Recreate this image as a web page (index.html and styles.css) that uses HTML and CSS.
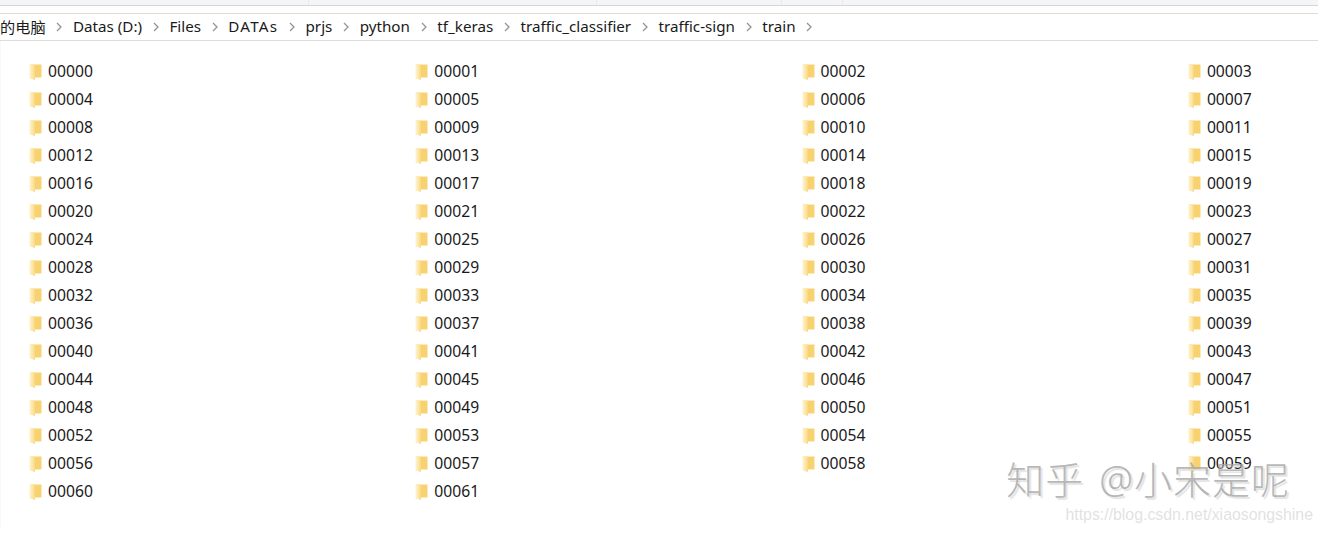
FILE: index.html
```html
<!DOCTYPE html>
<html lang="zh-CN">
    <head>
        <meta charset="UTF-8">
        <title>train</title>
        <link rel="stylesheet" href="styles.css">
    </head>
    <body>
        <svg width="0" height="0" class="defs">
            <defs>
                <linearGradient id="fold" x1="0" y1="0" x2="1" y2="0">
                    <stop offset="0" stop-color="#fdf3cf"/>
                    <stop offset="0.6" stop-color="#fce6a4"/>
                    <stop offset="1" stop-color="#f8d67c"/>
                </linearGradient>
                <symbol id="folder" viewBox="0 0 13 17">
                    <path d="M1 1.5h11.5v13H1z" fill="#f8d271"/>
                    <path d="M0.5 0.5l5.5 1.5v15l-5.5-1.5z" fill="url(#fold)"/>
                </symbol>
                <symbol id="chev" viewBox="0 0 6 10">
                    <path d="M1 1l4 4-4 4" fill="none" stroke="#949494" stroke-width="1.3"/>
                </symbol>
            </defs>
        </svg>
        <div class="window">
            <div class="tabs">
                <span class="tab tab-a"></span>
                <span class="tab tab-b"></span>
                <span class="tab tab-c"></span>
                <span class="tab tab-d"></span>
            </div>
            <div class="address">
                <span class="crumb">的电脑</span><svg class="chev"><use href="#chev"/></svg>
                <span class="crumb">Datas (D:)</span><svg class="chev"><use href="#chev"/></svg>
                <span class="crumb">Files</span><svg class="chev"><use href="#chev"/></svg>
                <span class="crumb crumb-caps">DATAs</span><svg class="chev"><use href="#chev"/></svg>
                <span class="crumb">prjs</span><svg class="chev"><use href="#chev"/></svg>
                <span class="crumb">python</span><svg class="chev"><use href="#chev"/></svg>
                <span class="crumb">tf_keras</span><svg class="chev"><use href="#chev"/></svg>
                <span class="crumb">traffic_classifier</span><svg class="chev"><use href="#chev"/></svg>
                <span class="crumb">traffic-sign</span><svg class="chev"><use href="#chev"/></svg>
                <span class="crumb">train</span><svg class="chev"><use href="#chev"/></svg>
            </div>
            <div class="files" id="files"></div>
        </div>
        <div class="mark">
            <div class="mark-zh">知乎 @小宋是呢</div>
            <div class="mark-url">https://blog.csdn.net/xiaosongshine</div>
        </div>
        <script>
            var box = document.getElementById('files');
            for (var i = 0; i < 62; i++) {
                var row = document.createElement('div');
                row.className = 'file';
                row.innerHTML = '<svg class="folder"><use href="#folder"/></svg><span>' + String(i).padStart(5, '0') + '</span>';
                box.appendChild(row);
            }
        </script>
    </body>
</html>
```

FILE: styles.css
```css
* {
    margin: 0;
    padding: 0;
    box-sizing: border-box;
}

html, body {
    overflow: hidden;
}

body {
    position: relative;
    width: 1322px;
    height: 533px;
    background-color: #fff;
    color: #1a1a1a;
    font-family: "Noto Sans", "Noto Sans CJK SC", sans-serif;
}

.defs {
    position: absolute;
}

.window {
    width: 1318px;
}

/* 顶部标签条 */
.tabs {
    display: flex;
    height: 6px;
    background-color: #f4f5f7;
    border-bottom: 1px solid #d6d6d6;
}

.tab {
    height: 5px;
    border-right: 1px solid #eaeaea;
}

.tab-a { width: 309px; }
.tab-b { width: 288px; }
.tab-c { width: 185px; }
.tab-d { width: 61px; }

/* 地址栏 */
.address {
    display: flex;
    align-items: center;
    height: 28px;
    margin-top: 7px;
    border-top: 1px solid #dedcd8;
    border-bottom: 1px solid #dcdcdc;
    font-size: 15.2px;
    white-space: nowrap;
}

.crumb {
    margin-top: -3px;
}

.crumb-caps {
    letter-spacing: 1.2px;
}

.chev {
    width: 6px;
    height: 10px;
    margin: 0 10.7px;
}

/* 文件列表 */
.files {
    display: grid;
    grid-template-columns: repeat(3, 386.3px) 1fr;
    grid-auto-rows: 28px;
    height: 487px;
    padding: 16px 0 0 28px;
    border-left: 1px solid #f8f8f8;
    font-size: 15.7px;
}

.file {
    display: flex;
    align-items: center;
    gap: 6px;
}

.folder {
    width: 13px;
    height: 17px;
}

/* 水印 */
.mark {
    position: absolute;
    right: 9px;
    top: 455px;
    text-align: right;
}

.mark-zh {
    padding-right: 23px;
    font-size: 38px;
    font-weight: 300;
    line-height: 48px;
    word-spacing: 4px;
    color: rgba(165, 165, 165, 0.8);
    text-shadow: 2px 2px 1px rgba(205, 205, 205, 0.6);
    letter-spacing: 1px;
}

.mark-url {
    margin-top: 3px;
    font-family: "Liberation Sans", sans-serif;
    font-size: 15.85px;
    color: rgba(205, 205, 205, 0.6);
}
```
